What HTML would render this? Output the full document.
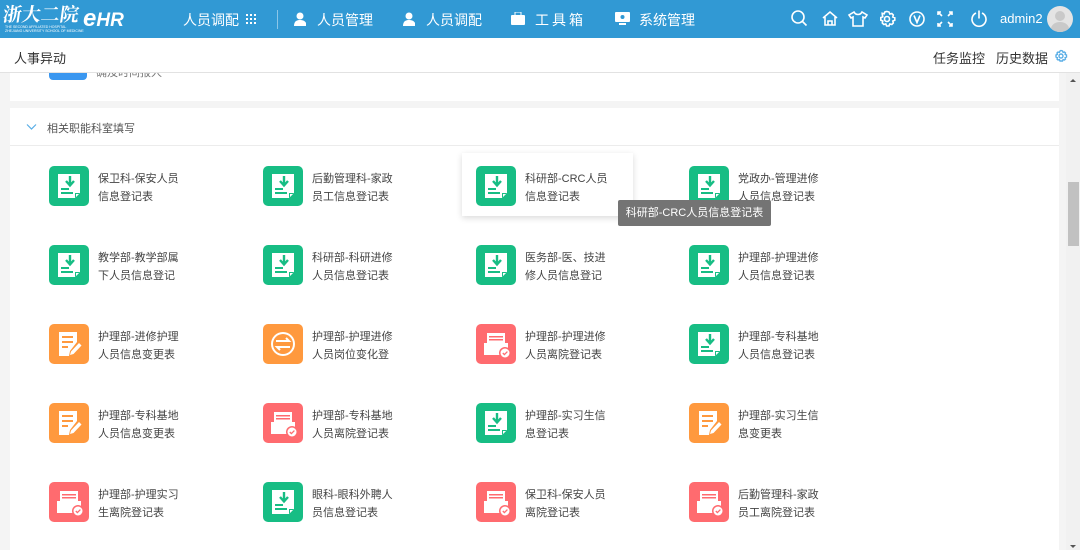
<!DOCTYPE html>
<html><head><meta charset="utf-8">
<style>
*{margin:0;padding:0;box-sizing:border-box}
body{width:1080px;height:550px;overflow:hidden;background:#f4f4f4;font-family:"Liberation Sans","Noto Sans CJK SC",sans-serif;position:relative}
.hd{position:absolute;left:0;top:0;width:1080px;height:38px;background:#3199d4;color:#fff}
.hd .t{position:absolute;top:10px;font-size:14px;white-space:nowrap}
.sub{position:absolute;left:0;top:38px;width:1080px;height:35px;background:#fff;border-bottom:1px solid #e2e2e2;font-size:13px;color:#333;z-index:2}
.card{position:absolute;left:10px;background:#fff;width:1049px;overflow:hidden}
.it{position:absolute;width:180px;height:45px}
.it svg{position:absolute;left:0;top:0}
.it .tx{position:absolute;left:49px;top:4px;font-size:11px;line-height:18px;color:#444;white-space:nowrap}
</style></head><body>
<div class="hd">
  <div style="position:absolute;left:3px;top:4px;font-family:'Noto Serif CJK SC',serif;font-size:19px;font-weight:bold;letter-spacing:0px;line-height:20px;transform:skewX(-8deg)">浙大二院</div>
  <div style="position:absolute;left:5px;top:25px;font-size:3.5px;line-height:4px;white-space:nowrap">THE SECOND AFFILIATED HOSPITAL<br>ZHEJIANG UNIVERSITY SCHOOL OF MEDICINE</div>
  <div style="position:absolute;left:83px;top:6px;font-size:24px;font-style:italic;font-weight:bold;line-height:26px">e<span style="font-size:19px">HR</span></div>
  <div class="t" style="left:183px">人员调配</div>
  <svg style="position:absolute;left:246px;top:14px" width="11" height="11" fill="#fff"><g><rect x="0" y="0" width="2" height="2"/><rect x="4" y="0" width="2" height="2"/><rect x="8" y="0" width="2" height="2"/><rect x="0" y="4" width="2" height="2"/><rect x="4" y="4" width="2" height="2"/><rect x="8" y="4" width="2" height="2"/><rect x="0" y="8" width="2" height="2"/><rect x="4" y="8" width="2" height="2"/><rect x="8" y="8" width="2" height="2"/></g></svg>
  <div style="position:absolute;left:277px;top:10px;width:1px;height:19px;background:#8cc6e8"></div>
  <svg style="position:absolute;left:294px;top:12px" width="14" height="14" fill="#fff"><circle cx="6" cy="4" r="3.5"/><path d="M0 14c0-5 3-6 6-6s5 1 6 3v3z"/></svg>
  <div class="t" style="left:317px">人员管理</div>
  <svg style="position:absolute;left:403px;top:12px" width="14" height="14" fill="#fff"><circle cx="6" cy="4" r="3.5"/><path d="M0 14c0-5 3-6 6-6s5 1 6 3v3z"/></svg>
  <div class="t" style="left:426px">人员调配</div>
  <svg style="position:absolute;left:511px;top:12px" width="14" height="14" fill="#fff"><rect x="0" y="3" width="14" height="10" rx="1"/><rect x="4" y="0" width="6" height="4" fill="none" stroke="#fff"/></svg>
  <div class="t" style="left:535px;letter-spacing:3px">工具箱</div>
  <svg style="position:absolute;left:615px;top:12px" width="15" height="13" fill="#fff"><rect x="0" y="0" width="15" height="10" rx="1"/><rect x="4" y="11" width="7" height="2"/><circle cx="7.5" cy="5" r="2" fill="#3199d4"/></svg>
  <div class="t" style="left:639px">系统管理</div>
  <svg style="position:absolute;left:790px;top:9px" width="200" height="20" fill="none" stroke="#fff" stroke-width="1.6">
    <circle cx="8" cy="8" r="6"/><path d="M12.5 12.5l4 4"/>
    <path d="M33 9l7-6 7 6M35 8v8h10V8M38 16v-4h4v4"/>
    <path d="M64 3l-5 3 2 3 2-1v9h10V8l2 1 2-3-5-3c-1 2-2 2.5-4 2.5S65 5 64 3z"/>
    <circle cx="97" cy="10" r="2.5"/><path d="M97 2.5l2 .5.8 2 2-.5 1.5 1.5-.5 2 2 .8v2.4l-2 .8.5 2-1.5 1.5-2-.5-.8 2h-2.4l-.8-2-2 .5-1.5-1.5.5-2-2-.8V8.6l2-.8-.5-2L92.2 4.3l2 .5.8-2z"/>
    <circle cx="127" cy="10" r="7"/><path d="M124 6.5l3 7 3-7"/>
    <path d="M151 3h-3v3M148 3l4 4M159 3h3v3M162 3l-4 4M151 17h-3v-3M148 17l4-4M159 17h3v-3M162 17l-4-4"/>
    <path d="M186 4a7 7 0 1 0 6 0M189 1.5v8"/>
  </svg>
  <div class="t" style="left:1000px;font-size:13px;top:11px">admin2</div>
  <div style="position:absolute;left:1047px;top:6px;width:26px;height:26px;border-radius:50%;background:#e4e4e4;overflow:hidden"><div style="position:absolute;left:8px;top:5px;width:10px;height:10px;border-radius:50%;background:#c9c9c9"></div><div style="position:absolute;left:4px;top:16px;width:18px;height:14px;border-radius:50%;background:#c9c9c9"></div></div>
</div>
<div class="sub">
  <div style="position:absolute;left:14px;top:10px">人事异动</div>
  <div style="position:absolute;left:933px;top:10px">任务监控</div>
  <div style="position:absolute;left:996px;top:10px">历史数据</div>
  <svg style="position:absolute;left:1054px;top:11px" width="14" height="14" fill="none" stroke="#5aaee6" stroke-width="1.4"><circle cx="7" cy="7" r="2"/><path d="M7 1.5l1.5.5.6 1.4 1.4-.4 1 1-.4 1.4 1.4.6v2l-1.4.6.4 1.4-1 1-1.4-.4-.6 1.4H6l-.6-1.4-1.4.4-1-1 .4-1.4L2 8V6l1.4-.6L3 4l1-1 1.4.4L6 2z"/></svg>
</div>
<div class="card" style="top:73px;height:28px">
  <div style="position:absolute;left:39px;top:-6px;width:38px;height:13px;background:#3a97f0;border-radius:0 0 4px 4px"></div>
  <div style="position:absolute;left:86px;top:-9px;font-size:11px;color:#777">确及时间报人</div>
</div>
<div class="card" style="top:108px;height:442px">
  <svg style="position:absolute;left:16px;top:15px" width="11" height="8" fill="none" stroke="#5aaee6" stroke-width="1.2"><path d="M1 1.5l4.5 4.5 4.5-4.5"/></svg>
  <div style="position:absolute;left:37px;top:12px;font-size:11px;color:#555">相关职能科室填写</div>
  <div style="position:absolute;left:0;top:37px;width:1049px;height:1px;background:#ececec"></div>
</div>
<svg width="0" height="0" style="position:absolute">
 <defs>
  <g id="G"><rect width="40" height="40" rx="5" fill="#17bd84"/><path d="M9 8h22v19l-5 5H9z" fill="#fff"/><path d="M26 32v-5h5" fill="#17bd84"/><path d="M27 28h3l-3 3z" fill="#fff"/><path d="M21 10v8M17 15l4 4.5 4-4.5" stroke="#17bd84" stroke-width="2.4" fill="none"/><rect x="12" y="22" width="8" height="2" fill="#17bd84"/><rect x="12" y="26" width="12" height="2" fill="#17bd84"/></g>
  <g id="O"><rect width="40" height="40" rx="5" fill="#ff993e"/><path d="M10 8h18v10l-7 9-1 5H10z" fill="#fff"/><rect x="13" y="12" width="11" height="2" fill="#ff993e"/><rect x="13" y="17" width="11" height="2" fill="#ff993e"/><rect x="13" y="22" width="6" height="2" fill="#ff993e"/><path d="M30 19l2.5 2.5-8 8.5-3.5 1 1-3.5z" fill="#fff"/></g>
  <g id="S"><rect width="40" height="40" rx="5" fill="#ff993e"/><circle cx="20" cy="20" r="12" fill="#fff"/><circle cx="20" cy="20" r="10" fill="#ff993e"/><path d="M13 17h13l-3-3M27 23H14l3 3" stroke="#fff" stroke-width="2" fill="none"/></g>
  <g id="R"><rect width="40" height="40" rx="5" fill="#ff6b6f"/><rect x="11" y="9" width="18" height="10" fill="#fff"/><rect x="13" y="12" width="14" height="1.5" fill="#ff6b6f"/><rect x="13" y="15" width="14" height="1.5" fill="#ff6b6f"/><rect x="8" y="19" width="24" height="12" fill="#fff"/><circle cx="29" cy="29" r="6" fill="#ff6b6f"/><circle cx="29" cy="29" r="4.5" fill="#fff"/><path d="M26.8 29l1.6 1.6 3-3" stroke="#ff6b6f" stroke-width="1.3" fill="none"/></g>
 </defs>
</svg>
<div style="position:absolute;left:462px;top:153px;width:171px;height:63px;background:#fff;box-shadow:0 2px 6px rgba(0,0,0,.15)"></div>

<div class="it" style="left:49px;top:166px"><svg width="40" height="40"><use href="#G"/></svg><div class="tx">保卫科-保安人员<br>信息登记表</div></div>
<div class="it" style="left:263px;top:166px"><svg width="40" height="40"><use href="#G"/></svg><div class="tx">后勤管理科-家政<br>员工信息登记表</div></div>
<div class="it" style="left:476px;top:166px"><svg width="40" height="40"><use href="#G"/></svg><div class="tx">科研部-CRC人员<br>信息登记表</div></div>
<div class="it" style="left:689px;top:166px"><svg width="40" height="40"><use href="#G"/></svg><div class="tx">党政办-管理进修<br>人员信息登记表</div></div>

<div class="it" style="left:49px;top:245px"><svg width="40" height="40"><use href="#G"/></svg><div class="tx">教学部-教学部属<br>下人员信息登记</div></div>
<div class="it" style="left:263px;top:245px"><svg width="40" height="40"><use href="#G"/></svg><div class="tx">科研部-科研进修<br>人员信息登记表</div></div>
<div class="it" style="left:476px;top:245px"><svg width="40" height="40"><use href="#G"/></svg><div class="tx">医务部-医、技进<br>修人员信息登记</div></div>
<div class="it" style="left:689px;top:245px"><svg width="40" height="40"><use href="#G"/></svg><div class="tx">护理部-护理进修<br>人员信息登记表</div></div>

<div class="it" style="left:49px;top:324px"><svg width="40" height="40"><use href="#O"/></svg><div class="tx">护理部-进修护理<br>人员信息变更表</div></div>
<div class="it" style="left:263px;top:324px"><svg width="40" height="40"><use href="#S"/></svg><div class="tx">护理部-护理进修<br>人员岗位变化登</div></div>
<div class="it" style="left:476px;top:324px"><svg width="40" height="40"><use href="#R"/></svg><div class="tx">护理部-护理进修<br>人员离院登记表</div></div>
<div class="it" style="left:689px;top:324px"><svg width="40" height="40"><use href="#G"/></svg><div class="tx">护理部-专科基地<br>人员信息登记表</div></div>

<div class="it" style="left:49px;top:403px"><svg width="40" height="40"><use href="#O"/></svg><div class="tx">护理部-专科基地<br>人员信息变更表</div></div>
<div class="it" style="left:263px;top:403px"><svg width="40" height="40"><use href="#R"/></svg><div class="tx">护理部-专科基地<br>人员离院登记表</div></div>
<div class="it" style="left:476px;top:403px"><svg width="40" height="40"><use href="#G"/></svg><div class="tx">护理部-实习生信<br>息登记表</div></div>
<div class="it" style="left:689px;top:403px"><svg width="40" height="40"><use href="#O"/></svg><div class="tx">护理部-实习生信<br>息变更表</div></div>

<div class="it" style="left:49px;top:482px"><svg width="40" height="40"><use href="#R"/></svg><div class="tx">护理部-护理实习<br>生离院登记表</div></div>
<div class="it" style="left:263px;top:482px"><svg width="40" height="40"><use href="#G"/></svg><div class="tx">眼科-眼科外聘人<br>员信息登记表</div></div>
<div class="it" style="left:476px;top:482px"><svg width="40" height="40"><use href="#R"/></svg><div class="tx">保卫科-保安人员<br>离院登记表</div></div>
<div class="it" style="left:689px;top:482px"><svg width="40" height="40"><use href="#R"/></svg><div class="tx">后勤管理科-家政<br>员工离院登记表</div></div>

<div style="position:absolute;left:618px;top:200px;width:153px;height:26px;background:#747474;color:#fff;font-size:11px;line-height:26px;text-align:center;border-radius:2px">科研部-CRC人员信息登记表</div>

<div style="position:absolute;left:1066px;top:73px;width:14px;height:477px;background:#f1f1f1"></div>
<div style="position:absolute;left:1070px;top:79px;width:0;height:0;border-left:3px solid transparent;border-right:3px solid transparent;border-bottom:3px solid #555"></div>
<div style="position:absolute;left:1068px;top:182px;width:11px;height:64px;background:#c1c1c1"></div>
<div style="position:absolute;left:1070px;top:545px;width:0;height:0;border-left:3px solid transparent;border-right:3px solid transparent;border-top:3px solid #555"></div>
</body></html>
